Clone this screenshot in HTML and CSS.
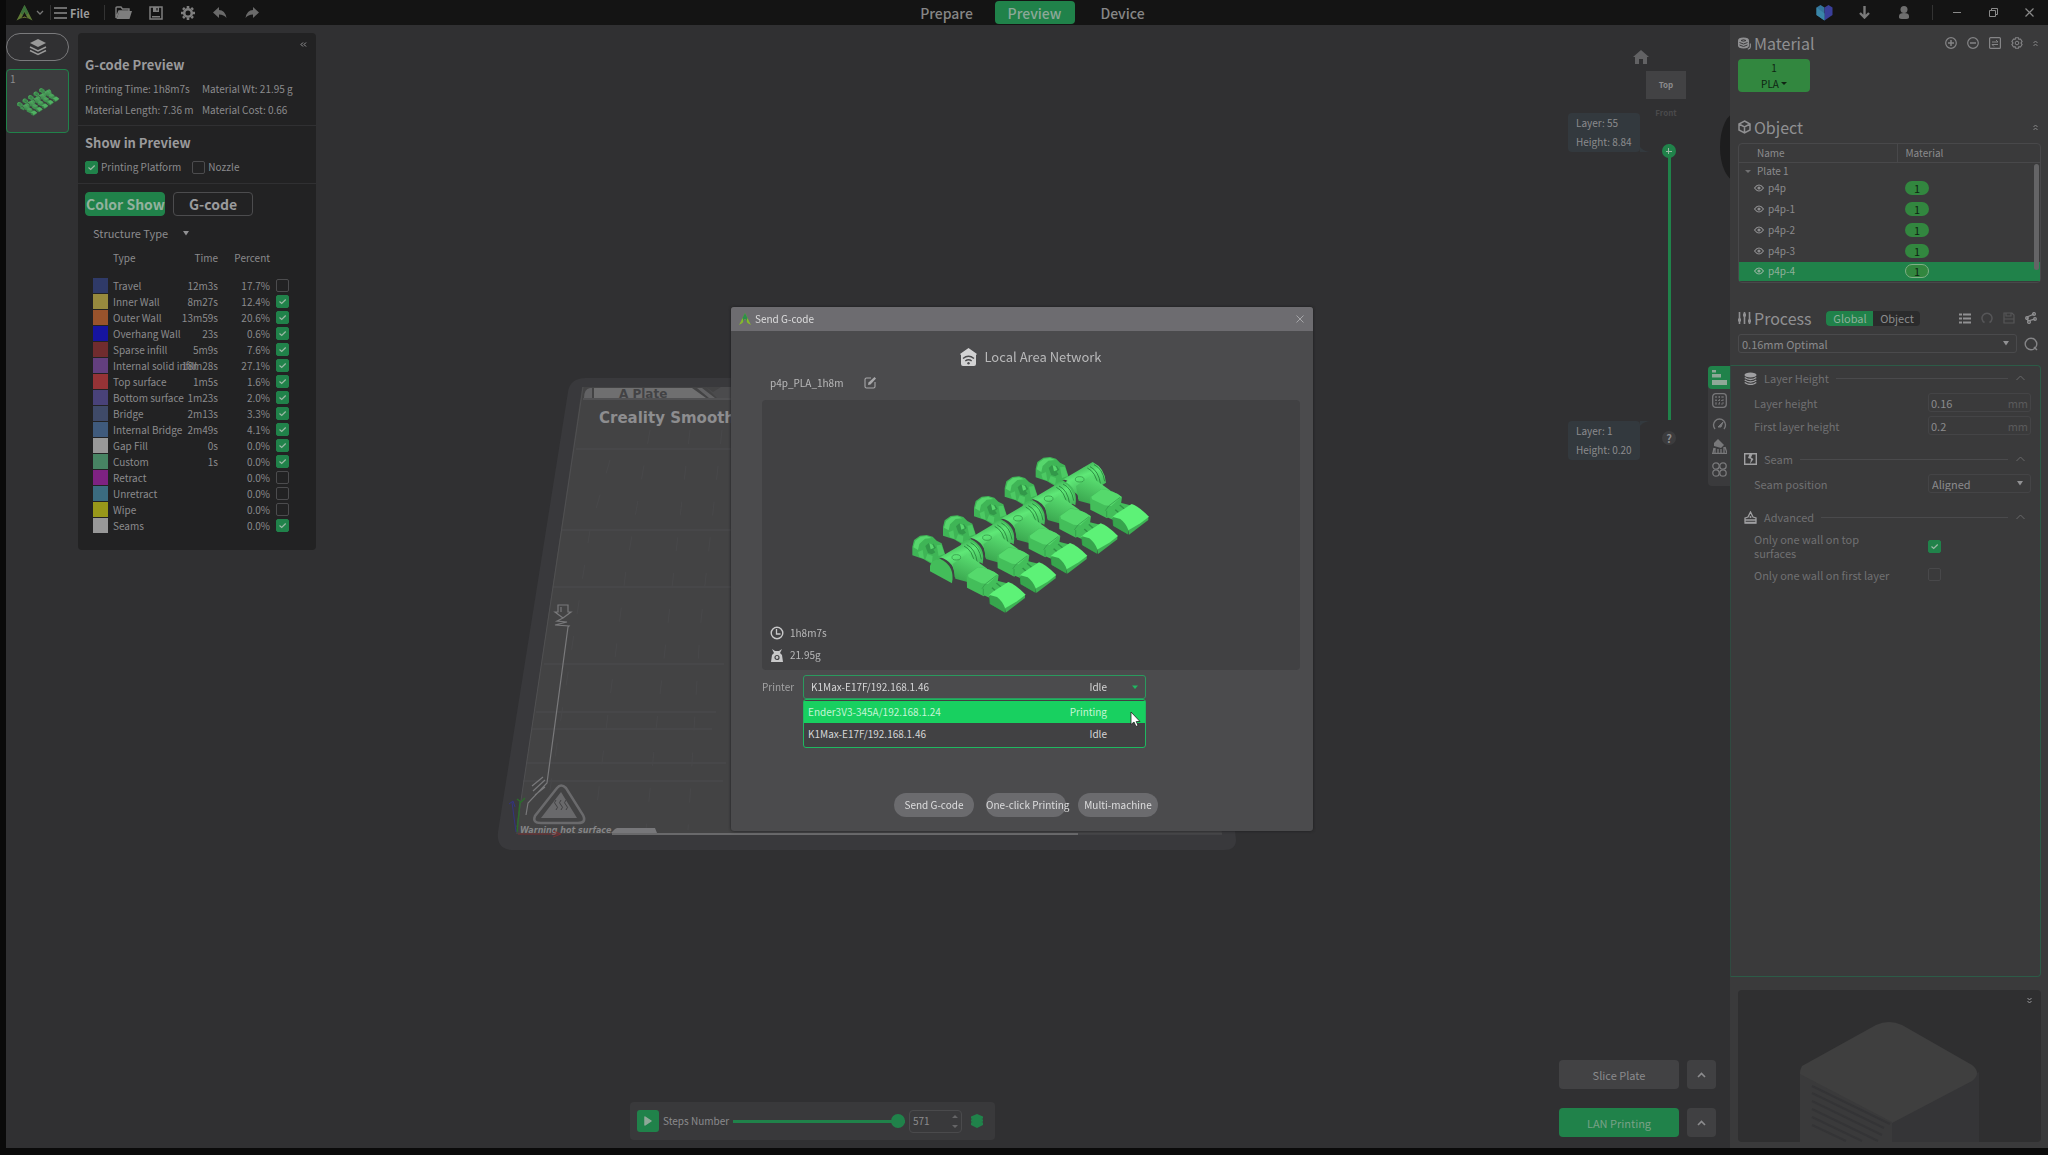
FILE: index.html
```html
<!DOCTYPE html>
<html lang="en">
<head>
  <meta charset="UTF-8">
  <meta name="viewport" content="width=device-width, initial-scale=1.0">
  <title>Creality Print</title>
  <link rel="stylesheet" href="styles.css">
</head>
<body>
  <header class="topbar">
    <div class="topbar-left">
      <svg class="logo" width="17" height="16" viewBox="0 0 17 16"><path d="M8.500 0 .5 15.500l5-2.500 3-6 3 6 5 2.500z" fill="#5f7a35"/><path d="M8.500 0 12.500 8 10.500 10 8.500 6l-2 4-2-2z" fill="#3a6f3a"/><path d="m5 13.500 3.500-2 3.500 2-3.500-1z" fill="#8c9a3c"/></svg>
      <svg class="logo-arrow" width="8" height="6" viewBox="0 0 8 6"><path d="m1 1 3 3 3-3" fill="none" stroke="#777" stroke-width="1.300"/></svg>
      <i class="sep"></i>
      <button class="menu-btn">
        <svg width="13" height="12" viewBox="0 0 13 12"><path d="M0 1h13M0 6h13M0 11h13" stroke="#8a8a8a" stroke-width="1.500"/></svg>
        File
      </button>
      <i class="sep sep-file"></i>
      <button class="tool" aria-label="Open"><svg width="18" height="14" viewBox="0 0 18 14"><path d="M1 12V2q0-1 1-1h4l1.500 2H14v2H4z" fill="none" stroke="#7e7e7e" stroke-width="1.400"/><path d="M4.500 5H17l-2.500 8H1.500z" fill="#7e7e7e"/></svg></button>
      <button class="tool" aria-label="Save"><svg width="14" height="14" viewBox="0 0 14 14"><path d="M1 1h12v12H1z" fill="none" stroke="#7e7e7e" stroke-width="1.500"/><path d="M4 1h6v5H4zM3 10h8v1.500H3z" fill="#7e7e7e"/><path d="M8 2v2.500" stroke="#141414" stroke-width="1.200"/></svg></button>
      <button class="tool" aria-label="Settings"><svg width="14" height="14" viewBox="0 0 14 14"><circle cx="7" cy="7" r="3.800" fill="none" stroke="#7e7e7e" stroke-width="2.600"/><path d="M7 0v2M7 12v2M0 7h2M12 7h2M2 2l1.500 1.500M10.500 10.500 12 12M2 12l1.500-1.500M10.500 3.500 12 2" stroke="#7e7e7e" stroke-width="2.600"/></svg></button>
      <button class="tool" aria-label="Undo"><svg width="14" height="12" viewBox="0 0 14 12"><path d="M6 0v3q6 0 7.500 8Q11 7.500 6 7.500V11L0 5.500z" fill="#6a6a6a"/></svg></button>
      <button class="tool" aria-label="Redo"><svg width="14" height="12" viewBox="0 0 14 12"><path d="M8 0v3Q2 3 .5 11 3 7.500 8 7.500V11l6-5.500z" fill="#6a6a6a"/></svg></button>
    </div>
    <nav class="tabs">
      <button class="tab">Prepare</button>
      <button class="tab active">Preview</button>
      <button class="tab">Device</button>
    </nav>
    <div class="topbar-right">
      <button class="tool wide" aria-label="Community"><svg width="17" height="16" viewBox="0 0 17 16"><path d="m.5 2.500 4-2.500 4 2.500v13L.5 10z" fill="#34749a"/><path d="m8.500 2.500 4-2.500 4 2.500V10l-8 5.500z" fill="#3a3f9a"/><path d="m.5 2.500 8 6v7l-8-5.500z" fill="#3a86a8"/></svg></button>
      <button class="tool wide" aria-label="Downloads"><svg width="11" height="13" viewBox="0 0 11 13"><path d="M5.500 0v10M1 7l4.500 4.500L10 7" fill="none" stroke="#7a7a7a" stroke-width="2.400"/></svg></button>
      <button class="tool wide" aria-label="Account"><svg width="12" height="14" viewBox="0 0 12 14"><circle cx="6" cy="3.500" r="3.500" fill="#6e6e6e"/><path d="M1 10q0-3 5-3t5 3v1.500Q11 13 6 13t-5-1.500z" fill="#6e6e6e"/></svg></button>
      <i class="sep"></i>
      <button class="tool win" aria-label="Minimize"><svg width="8" height="8" viewBox="0 0 8 8"><path d="M0 3.500h8" stroke="#8a8a8a"/></svg></button>
      <button class="tool win" aria-label="Restore"><svg width="9" height="9" viewBox="0 0 9 9"><path d="M.5 2.500h6v6h-6zM2.500 2.500v-2h6v6h-2" fill="none" stroke="#8a8a8a"/></svg></button>
      <button class="tool win" aria-label="Close"><svg width="9" height="9" viewBox="0 0 9 9"><path d="m.5.5 8 8m0-8-8 8" stroke="#8a8a8a" stroke-width="1.200"/></svg></button>
    </div>
  </header>

  <main class="workspace">
    <section class="viewport">
      <svg class="scene" viewBox="6 25 1724 1123" preserveAspectRatio="xMinYMin slice">
        <path d="M586 378h600l50 462q0 10-12 10H514q-18 0-16-18l70-440q2-14 18-14z" fill="#39393c"/>
        <path d="M582 387h590l50 447H516z" fill="#434344"/>
        <path d="M576 449h180M562 530h180M553 587h180M544 664h180M536 712h180M532 729h180M526 763h200M523 781h200" stroke="#4c4c4e"/>
        <path d="M610 460 590 530 570 660 550 790M650 430l-24 140-20 160-12 100M690 430l-16 140-18 160-10 100M722 430l-22 200-12 200" fill="none" stroke="#48484a" stroke-dasharray="14 22"/>
        <path d="m583 387-66 440" stroke="#505052"/>
        <path d="M594 388h98l14 10H594z" fill="#6f6f70"/>
        <path d="M584 398q0-9 6-10h2v10zM697 388h5l13 10h-6z" fill="#626264"/>
        <path d="M583 399h150" stroke="#606062"/>
        <path d="m706 387 7 5 8-5h20v11h-24z" fill="#4b4b4d"/>
        <text x="619" y="398" class="plate-tag">A Plate</text>
        <text x="599" y="423" class="plate-name">Creality Smooth</text>
        <path d="M558 605h10v7h3l-8 6-8-6h3zM561 607v5M563 618l-6 3 10 1-12 3 14 1-1 1-21 156-19 20-2 12M532 786l11-9M533 791l12-11M535 795l10-8" fill="none" stroke="#79797b" stroke-width="1.200"/>
        <path d="M557 788q4-5 9 0l17 27q4 8-5 8h-37q-9 0-6-7z" fill="none" stroke="#6a6a6c" stroke-width="2.500"/>
        <path d="m561 792 16 26h-36z" fill="#69696b"/>
        <path d="M556 800q-3 3 0 5t0 5M561 800q-3 3 0 5t0 5M566 800q-3 3 0 5t0 5" fill="none" stroke="#414143"/>
        <path d="m615 829 2-1h38l2 5h-46z" fill="#77777a"/>
        <path d="M612 834h466" stroke="#69696b" stroke-width="2"/>
        <path d="M1078 834h144" stroke="#4c4c4e"/>
        <text x="520" y="833" class="plate-warn">Warning hot surface</text>
        <path d="m517 832 3-30m-3-3 4 3 4-4" stroke="#2c6b2c" fill="none" stroke-width="1.500"/>
        <path d="M518 834h42m-7-3 8 3-8 3" stroke="#7a3033" fill="none"/>
        <path d="m516 832-4-30m-3 2 4-3 2 6" stroke="#333380" fill="none"/>
        <ellipse cx="1736" cy="147" rx="16" ry="34" fill="#1d1d1e"/>
      </svg>

      <div class="plates">
        <button class="plates-all" aria-label="All plates"><svg width="18" height="17" viewBox="0 0 18 17"><path d="m9 0 8 4-8 4-8-4z" fill="#999"/><path d="m1 8 8 4 8-4M1 11.500l8 4 8-4" fill="none" stroke="#999" stroke-width="1.500"/></svg></button>
        <button class="plate-thumb"><span>1</span>
          <svg width="44" height="30" viewBox="50 40 740 490"><use href="#model"/></svg>
        </button>
      </div>

      <aside class="gcode">
        <div class="gcode-block gcode-info">
          <button class="collapse" aria-label="Collapse"><svg width="7" height="5" viewBox="0 0 7 5"><path d="M3 .5l-2 2 2 2m3-4-2 2 2 2" fill="none" stroke="#98989a"/></svg></button>
          <h2>G-code Preview</h2>
          <div class="stats">
            <span>Printing Time: 1h8m7s</span><span>Material Wt: 21.95 g</span>
            <span>Material Length: 7.36 m</span><span>Material Cost: 0.66</span>
          </div>
        </div>
        <div class="gcode-block gcode-show">
          <h2>Show in Preview</h2>
          <div class="checks">
            <label><input type="checkbox" checked>Printing Platform</label>
            <label><input type="checkbox">Nozzle</label>
          </div>
        </div>
        <div class="gcode-modes">
          <button class="mode active">Color Show</button>
          <button class="mode">G-code</button>
        </div>
        <div class="gcode-types">
          <select class="structure" aria-label="Color scheme"><option>Structure Type</option></select>
          <table class="types">
            <thead><tr><th class="c-sw"></th><th class="c-type">Type</th><th class="c-time">Time</th><th class="c-pct">Percent</th><th class="c-chk"></th></tr></thead>
            <tbody>
              <tr><td><i class="sw travel"></i></td><td>Travel</td><td>12m3s</td><td>17.7%</td><td><input type="checkbox" aria-label="Travel"></td></tr>
              <tr><td><i class="sw inner"></i></td><td>Inner Wall</td><td>8m27s</td><td>12.4%</td><td><input type="checkbox" aria-label="Inner Wall" checked></td></tr>
              <tr><td><i class="sw outer"></i></td><td>Outer Wall</td><td>13m59s</td><td>20.6%</td><td><input type="checkbox" aria-label="Outer Wall" checked></td></tr>
              <tr><td><i class="sw overhang"></i></td><td>Overhang Wall</td><td>23s</td><td>0.6%</td><td><input type="checkbox" aria-label="Overhang Wall" checked></td></tr>
              <tr><td><i class="sw sparse"></i></td><td>Sparse infill</td><td>5m9s</td><td>7.6%</td><td><input type="checkbox" aria-label="Sparse infill" checked></td></tr>
              <tr><td><i class="sw solid"></i></td><td>Internal solid infill</td><td>18m28s</td><td>27.1%</td><td><input type="checkbox" aria-label="Internal solid infill" checked></td></tr>
              <tr><td><i class="sw top"></i></td><td>Top surface</td><td>1m5s</td><td>1.6%</td><td><input type="checkbox" aria-label="Top surface" checked></td></tr>
              <tr><td><i class="sw bottom"></i></td><td>Bottom surface</td><td>1m23s</td><td>2.0%</td><td><input type="checkbox" aria-label="Bottom surface" checked></td></tr>
              <tr><td><i class="sw bridge"></i></td><td>Bridge</td><td>2m13s</td><td>3.3%</td><td><input type="checkbox" aria-label="Bridge" checked></td></tr>
              <tr><td><i class="sw ibridge"></i></td><td>Internal Bridge</td><td>2m49s</td><td>4.1%</td><td><input type="checkbox" aria-label="Internal Bridge" checked></td></tr>
              <tr><td><i class="sw gap"></i></td><td>Gap Fill</td><td>0s</td><td>0.0%</td><td><input type="checkbox" aria-label="Gap Fill" checked></td></tr>
              <tr><td><i class="sw custom"></i></td><td>Custom</td><td>1s</td><td>0.0%</td><td><input type="checkbox" aria-label="Custom" checked></td></tr>
              <tr><td><i class="sw retract"></i></td><td>Retract</td><td></td><td>0.0%</td><td><input type="checkbox" aria-label="Retract"></td></tr>
              <tr><td><i class="sw unretract"></i></td><td>Unretract</td><td></td><td>0.0%</td><td><input type="checkbox" aria-label="Unretract"></td></tr>
              <tr><td><i class="sw wipe"></i></td><td>Wipe</td><td></td><td>0.0%</td><td><input type="checkbox" aria-label="Wipe"></td></tr>
              <tr><td><i class="sw seams"></i></td><td>Seams</td><td></td><td>0.0%</td><td><input type="checkbox" aria-label="Seams" checked></td></tr>
            </tbody>
          </table>
        </div>
      </aside>

      <div class="player">
        <button class="play" aria-label="Play"><svg width="8" height="10" viewBox="0 0 8 10"><path d="M1 1v8l6-4z" fill="#8fa898" stroke="#8fa898" stroke-width="1.500" stroke-linejoin="round"/></svg></button>
        <label for="steps">Steps Number</label>
        <input class="steps" id="steps" type="range" min="0" max="571" value="571">
        <div class="spin">
          <input type="text" value="571" aria-label="Step">
          <svg width="6" height="15" viewBox="0 0 6 15"><path d="m0 4 3-3 3 3zM0 11l3 3 3-3z" fill="#656567"/></svg>
        </div>
        <svg width="14" height="14" viewBox="0 0 14 14"><path d="m7 0 6 2.500v2l-1.500.5 1.500.5v2L11.500 8l1.500.5v2.500l-6 3-6-3V8.500L2.500 8 1 7.500v-2L2.500 5 1 4.500v-2z" fill="#20824a"/></svg>
      </div>

      <div class="view-tools">
        <div class="nav-cube">
          <svg class="home" width="16" height="14" viewBox="0 0 16 14"><path d="m8 0 8 7h-2v7h-4V9H6v5H2V7H0z" fill="#626264"/></svg>
          <span class="cube-top">Top</span>
          <span class="cube-front">Front</span>
        </div>
        <div class="layers">
          <div class="bubbles">
            <div class="bubble">Layer: 55<br>Height: 8.84<svg width="12" height="5" viewBox="0 0 12 5"><path d="M0 0q4 5 12 5H0z" fill="#33393e"/></svg></div>
            <div class="bubble low">Layer: 1<br>Height: 0.20<svg width="12" height="5" viewBox="0 0 12 5"><path d="M0 5q4-5 12-5H0z" fill="#33393e"/></svg></div>
          </div>
          <div class="layer-slider">
            <input class="layer-range" type="range" min="1" max="55" value="55" aria-label="Layer">
            <button class="help">?</button>
          </div>
          <div class="side-tabs">
            <button class="active" aria-label="Quality"><svg width="15" height="15" viewBox="0 0 15 15"><path d="M0 0h4v2.500H0zM0 4h9v3.500H0zM0 10h15v5H0z" fill="#8fa898"/></svg></button>
            <button aria-label="Infill"><svg width="15" height="15" viewBox="0 0 15 15"><rect x=".7" y=".7" width="13.600" height="13.600" rx="3" fill="none" stroke="#78787a" stroke-width="1.300"/><path d="M4 3v9M7.500 3v9M11 3v9M3 4h9M3 7.500h9M3 11h9" stroke="#6c6c6e" stroke-dasharray="2 1"/></svg></button>
            <button aria-label="Speed"><svg width="15" height="13" viewBox="0 0 15 13"><path d="M3 12a6 6 0 1 1 9 0" fill="none" stroke="#78787a" stroke-width="1.400"/><path d="m6 10 5-5-2 5z" fill="#78787a" stroke="#78787a"/></svg></button>
            <button aria-label="Support"><svg width="15" height="15" viewBox="0 0 15 15"><path d="m2 4 4-4 6 6-3 3-7-2z" fill="#78787a"/><path d="M0 14.300h15M3 9v5M6 10v4M9 10v4M12 8v6M2 9l-1 5m12-6 2 6" stroke="#78787a" stroke-width="1.300"/></svg></button>
            <button aria-label="Other"><svg width="15" height="15" viewBox="0 0 15 15"><g fill="none" stroke="#78787a" stroke-width="1.300"><circle cx="4" cy="4" r="3.200"/><circle cx="11" cy="4" r="3.200"/><circle cx="4" cy="11" r="3.200"/><circle cx="11" cy="11" r="3.200"/></g></svg></button>
          </div>
        </div>
        <div class="actions">
          <button class="action">Slice Plate</button>
          <button class="action-more" aria-label="Slice options"><svg width="9" height="6" viewBox="0 0 9 6"><path d="m1 5 3.500-3.500L8 5" fill="none" stroke="#8c8c8e" stroke-width="1.600"/></svg></button>
          <button class="action primary">LAN Printing</button>
          <button class="action-more" aria-label="Print options"><svg width="9" height="6" viewBox="0 0 9 6"><path d="m1 5 3.500-3.500L8 5" fill="none" stroke="#8c8c8e" stroke-width="1.600"/></svg></button>
        </div>
      </div>
    </section>

    <aside class="sidebar">
      <section class="material">
        <div class="side-head">
          <svg width="13" height="13" viewBox="0 0 13 13"><path d="M0 3.500Q0 .5 5.500.5T11 3.500v5q0 3-5.500 3T0 8.500z" fill="#909092"/><path d="M1.500 5.500q4 3 8 0M1.500 8q4 3 8 0M3 3.500q2.500-1.500 5 0-2.500 1.500-5 0" stroke="#3a3a3b" fill="none"/><path d="M12.300 6.500v3.500q0 1.500-2.500 2.300" fill="none" stroke="#909092" stroke-width="1.200"/></svg>
          <h3>Material</h3>
          <div class="head-icons">
            <button aria-label="Add"><svg width="12" height="12" viewBox="0 0 12 12"><circle cx="6" cy="6" r="5.300" fill="none" stroke="#858587" stroke-width="1.200"/><path d="M3 6h6M6 3v6" stroke="#858587" stroke-width="1.500"/></svg></button>
            <button aria-label="Remove"><svg width="12" height="12" viewBox="0 0 12 12"><circle cx="6" cy="6" r="5.300" fill="none" stroke="#858587" stroke-width="1.200"/><path d="M3 6h6" stroke="#858587" stroke-width="1.500"/></svg></button>
            <button aria-label="Sync"><svg width="12" height="12" viewBox="0 0 12 12"><rect x=".6" y=".6" width="10.800" height="10.800" rx="1" fill="none" stroke="#858587" stroke-width="1.200"/><path d="M3 5h6L7 3M9 7.500H3l2 2" fill="none" stroke="#858587"/></svg></button>
            <button aria-label="Material settings"><svg width="12" height="12" viewBox="0 0 12 12"><path d="M4.600.7h2.800l.5 1.600 1.600-.3 1.600 2.400L10 6l1.100 1.600L9.500 10l-1.600-.3-.5 1.600H4.600l-.5-1.600-1.600.3L.9 7.600 2 6 .9 4.400 2.500 2l1.600.3z" fill="none" stroke="#858587" stroke-width="1.100"/><circle cx="6" cy="6" r="1.800" fill="none" stroke="#858587"/></svg></button>
            <svg class="fold" width="5" height="7" viewBox="0 0 5 7"><path d="m.5 3 2-2 2 2m-4 3 2-2 2 2" fill="none" stroke="#858587"/></svg>
          </div>
        </div>
        <button class="filament"><span>1</span><span>PLA <svg width="6" height="3" viewBox="0 0 6 3"><path d="M0 0h6L3 3z" fill="#0f2413"/></svg></span></button>
      </section>

      <section class="objects">
        <div class="side-head">
          <svg width="13" height="14" viewBox="0 0 13 14"><path d="m6.500 1 5.500 3v6l-5.500 3L1 10V4zM1 4l5.500 3L12 4M6.500 7v6" fill="none" stroke="#909092" stroke-width="1.500"/></svg>
          <h3>Object</h3>
          <div class="head-icons"><svg class="fold" width="5" height="7" viewBox="0 0 5 7"><path d="m.5 3 2-2 2 2m-4 3 2-2 2 2" fill="none" stroke="#858587"/></svg></div>
        </div>
        <div class="object-box">
          <table class="object-table">
            <thead><tr><th>Name</th><th>Material</th></tr></thead>
            <tbody>
              <tr class="plate-row"><td colspan="2"><svg width="6" height="3" viewBox="0 0 6 3"><path d="M0 0h6L3 3z" fill="#707072"/></svg>Plate 1</td></tr>
              <tr><td><svg class="eye" width="10" height="8" viewBox="0 0 10 8"><path d="M.5 4q4.500-6 9 0-4.500 6-9 0z" fill="none" stroke="#8c8c8e" stroke-width="1.200"/><circle cx="5" cy="4" r="1.600" fill="#8c8c8e"/></svg>p4p</td><td><span class="pill">1</span></td></tr>
              <tr><td><svg class="eye" width="10" height="8" viewBox="0 0 10 8"><path d="M.5 4q4.500-6 9 0-4.500 6-9 0z" fill="none" stroke="#8c8c8e" stroke-width="1.200"/><circle cx="5" cy="4" r="1.600" fill="#8c8c8e"/></svg>p4p-1</td><td><span class="pill">1</span></td></tr>
              <tr><td><svg class="eye" width="10" height="8" viewBox="0 0 10 8"><path d="M.5 4q4.500-6 9 0-4.500 6-9 0z" fill="none" stroke="#8c8c8e" stroke-width="1.200"/><circle cx="5" cy="4" r="1.600" fill="#8c8c8e"/></svg>p4p-2</td><td><span class="pill">1</span></td></tr>
              <tr><td><svg class="eye" width="10" height="8" viewBox="0 0 10 8"><path d="M.5 4q4.500-6 9 0-4.500 6-9 0z" fill="none" stroke="#8c8c8e" stroke-width="1.200"/><circle cx="5" cy="4" r="1.600" fill="#8c8c8e"/></svg>p4p-3</td><td><span class="pill">1</span></td></tr>
              <tr class="selected"><td><svg class="eye" width="10" height="8" viewBox="0 0 10 8"><path d="M.5 4q4.500-6 9 0-4.500 6-9 0z" fill="none" stroke="#8fb09b" stroke-width="1.200"/><circle cx="5" cy="4" r="1.600" fill="#8fb09b"/></svg>p4p-4</td><td><span class="pill">1</span></td></tr>
            </tbody>
          </table>
          <i class="scrollbar"></i>
        </div>
      </section>

      <section class="process">
        <div class="side-head">
          <svg width="13" height="14" viewBox="0 0 13 14"><path d="M1.500 1v12M6.500 1v12M11.500 1v12" stroke="#909092" stroke-width="1.600"/><path d="M0 9h3M5 4h3M10 10h3" stroke="#909092" stroke-width="3"/></svg>
          <h3>Process</h3>
          <div class="segment"><button class="active">Global</button><button>Object</button></div>
          <div class="head-icons">
            <button aria-label="List"><svg width="12" height="11" viewBox="0 0 12 11"><path d="M0 1.500h3M0 5.500h3M0 9.500h3M4 1.500h8M4 5.500h8M4 9.500h8" stroke="#909092" stroke-width="1.800"/></svg></button>
            <button aria-label="Reset"><svg width="12" height="12" viewBox="0 0 12 12"><path d="M3.500 10.500a5 5 0 1 1 5 0" fill="none" stroke="#565658" stroke-width="1.500"/></svg></button>
            <button aria-label="Save preset"><svg width="12" height="12" viewBox="0 0 12 12"><path d="M1 1h8l2 2v8H1zM3 1v3h5V1M1 7h10" fill="none" stroke="#565658" stroke-width="1.200"/></svg></button>
            <button aria-label="Compare"><svg width="12" height="12" viewBox="0 0 12 12"><path d="m2 5 7-3M3 9l7-2M2 5l1 4" stroke="#909092" stroke-width="1.300"/><g fill="none" stroke="#909092" stroke-width="1.300"><circle cx="9" cy="2" r="1.400"/><circle cx="2" cy="6" r="1.300"/><circle cx="4" cy="10" r="1.400"/><circle cx="10" cy="7" r="1.300"/></g></svg></button>
          </div>
        </div>
        <div class="preset">
          <select aria-label="Preset"><option>0.16mm Optimal</option></select>
          <button aria-label="Search"><svg width="14" height="14" viewBox="0 0 14 14"><circle cx="7" cy="7" r="5.800" fill="none" stroke="#858587" stroke-width="1.400"/><path d="m10 10 3 3" stroke="#858587" stroke-width="1.500"/></svg></button>
        </div>
      </section>

      <section class="settings">
        <div class="group-head">
          <svg width="13" height="13" viewBox="0 0 13 13"><ellipse cx="6.500" cy="3" rx="6" ry="2.500" fill="#a0a0a2"/><path d="M.7 5.500q6 4 11.600 0M.7 8q6 4 11.600 0M.7 10.500q6 4 11.600 0" fill="none" stroke="#a0a0a2" stroke-width="1.300"/></svg>
          <span>Layer Height</span><i></i>
          <svg width="9" height="6" viewBox="0 0 9 6"><path d="m.5 5 4-4 4 4" fill="none" stroke="#68686a"/></svg>
        </div>
        <div class="field"><label for="lh">Layer height</label><div class="unit"><input id="lh" type="text" value="0.16"><span>mm</span></div></div>
        <div class="field"><label for="flh">First layer height</label><div class="unit"><input id="flh" type="text" value="0.2"><span>mm</span></div></div>
        <div class="group-head">
          <svg width="13" height="12" viewBox="0 0 13 12"><path d="M.7.7h11.600v10.600H.7z" fill="none" stroke="#a0a0a2" stroke-width="1.400"/><path d="M5.500 1 4 5l3 1-1 5 3.500-5-2.500-1.500L8.500 1z" fill="#a0a0a2"/></svg>
          <span>Seam</span><i></i>
          <svg width="9" height="6" viewBox="0 0 9 6"><path d="m.5 5 4-4 4 4" fill="none" stroke="#68686a"/></svg>
        </div>
        <div class="field"><label for="seam">Seam position</label><select id="seam"><option>Aligned</option></select></div>
        <div class="group-head">
          <svg width="13" height="13" viewBox="0 0 13 13"><path d="m1 7 3-1 2.500-5L9 6l3 1v5H1z" fill="none" stroke="#a0a0a2" stroke-width="1.300"/><path d="M1 9h11M1 11.500h11" stroke="#a0a0a2" stroke-width="1.300"/><circle cx="6.500" cy="6" r="1" fill="#a0a0a2"/></svg>
          <span>Advanced</span><i></i>
          <svg width="9" height="6" viewBox="0 0 9 6"><path d="m.5 5 4-4 4 4" fill="none" stroke="#68686a"/></svg>
        </div>
        <div class="field tall"><label for="topwall">Only one wall on top surfaces</label><input id="topwall" type="checkbox" checked></div>
        <div class="field"><label for="firstwall">Only one wall on first layer</label><input id="firstwall" class="faint" type="checkbox"></div>
      </section>

      <section class="camera">
        <svg class="stack" viewBox="0 0 303 152" preserveAspectRatio="xMidYMin slice">
          <path d="M62 82v70h179V82l-90 45z" fill="#353537"/>
          <path d="M64 76 138 35q13-6 26 0l70 40q10 8 0 16l-80 42-90-42q-4-8 0-15z" fill="#3f3f3f"/>
          <path d="M62 84v68h92v-20z" fill="#3a3a3b"/>
          <path d="m74 96 78 38M74 103l72 35M74 111l70 34M74 119l66 32M74 127l50 24M74 135l34 16" stroke="#343436" stroke-width="2"/>
        </svg>
        <button class="camera-fold" aria-label="Fold"><svg width="5" height="7" viewBox="0 0 5 7"><path d="m.5 1 2 2 2-2m-4 3 2 2 2-2" fill="none" stroke="#98989a"/></svg></button>
      </section>
    </aside>
  </main>

  <div class="modal-layer">
    <section class="modal" role="dialog" aria-labelledby="modal-title">
      <div class="modal-title">
        <svg width="12" height="12" viewBox="0 0 12 12"><path d="M6 0 0 12l3.500-2L6 5l2.500 5 3.500 2z" fill="#86b82c"/><path d="M6 0 3.500 5 5 9V6h2v3l1.500-4z" fill="#2e8f4a"/></svg>
        <span id="modal-title">Send G-code</span>
        <button aria-label="Close"><svg width="8" height="8" viewBox="0 0 8 8"><path d="m.5.5 7 7m0-7-7 7" stroke="#a5a5a8"/></svg></button>
      </div>
      <div class="modal-body">
        <div class="lan">
          <svg width="17" height="18" viewBox="0 0 17 18"><path d="M8.500 0 17 6l-1 1v9q0 2-2 2H3q-2 0-2-2V7L0 6z" fill="#d2d2d3"/><path d="M3 10.500q5.500-4.500 11 0M5.300 13q3.200-2.500 6.400 0" fill="none" stroke="#4b4b4d" stroke-width="1.500"/><circle cx="8.500" cy="15.300" r="1.200" fill="#4b4b4d"/></svg>
          <span>Local Area Network</span>
        </div>
        <div class="file-name">
          <span>p4p_PLA_1h8m</span>
          <button aria-label="Rename"><svg width="12" height="12" viewBox="0 0 12 12"><path d="M7 1H2.500Q1 1 1 2.500v7Q1 11 2.500 11h7q1.500 0 1.500-1.500V5" fill="none" stroke="#a8a8aa" stroke-width="1.100"/><path d="m4 8 .5-2.500L10.500 0 12 1.500 6.500 7.500z" fill="#a8a8aa"/></svg></button>
        </div>
        <div class="model-view">
          <svg class="model" viewBox="0 0 840 570">
            <defs>
              <linearGradient id="bar" x1=".2" y1=".1" x2=".6" y2="1">
                <stop offset="0" stop-color="#3aa850"/><stop offset=".35" stop-color="#5fe877"/><stop offset="1" stop-color="#38a44d"/>
              </linearGradient>
              <linearGradient id="torso" x1=".8" y1="0" x2=".3" y2="1">
                <stop offset="0" stop-color="#5fe877"/><stop offset="1" stop-color="#39a54e"/>
              </linearGradient>
              <g id="figure">
                <path d="m67 320 5-20 18-13 20-2 18 5 12 12 15 8 11 35-42 26-24-14-33-11z" fill="#3fb556"/>
                <path d="m70 322 6-20 16-12 18-2 15 6-20 2-17 16-4 18z" fill="#56d66c"/>
                <path d="m106 318 10-9 6 6 8-4 8 12-8 6 6 8-10 6-12-4-4-10z" fill="#329849"/>
                <path d="m84 336 14-6 4 26-14-5zM112 342l16 6-2 20-20-10zM140 316l14-2 10 28-18 6z" fill="#4cc963"/>
                <path d="m118 310 10 4 4 10-10 4z" fill="#57d86d"/>
                <path d="M150 352 238 300q36 18 40 62l-84 50q2-46-44-60z" fill="url(#bar)"/>
                <path d="M150 356q-28 4-30 22v16l66 36q10-52-36-74z" fill="#43bd5a"/>
                <path d="M222 318q26 12 32 54M230 314q26 12 32 54M242 308q26 12 32 50" fill="none" stroke="#238039" stroke-width="2.500"/>
                <path d="m188 372 42-30 62 44-46 44-50-14z" fill="url(#torso)"/>
                <ellipse cx="199" cy="352" rx="13" ry="8" fill="none" stroke="#2c8a40" stroke-width="2"/>
                <path d="m282 438 22-20 56 14-60 42-22-10z" fill="#43bd5a"/>
                <path d="m296 434 22 20M316 426l18 16" stroke="#2f9446" stroke-width="4"/>
                <path d="m230 405 34-24q36 4 62 24l-3 20-42 44-50-26z" fill="#43be5a"/>
                <path d="m234 404 30-22q34 2 60 22l-30 28-20-2-38-18z" fill="#55d96c"/>
                <path d="m276 446 10-14 34-26M280 446v20" fill="none" stroke="#2f9446" stroke-width="2"/>
                <path d="m297 466 48 38v14l-46-27z" fill="#2f9a45"/>
                <path d="m345 504 60-40v10l-58 44z" fill="#3db254"/>
                <path d="M297 466q6-6 14-12l44-28q20 6 52 38l-26 20-38 22z" fill="#5df277"/>
                <path d="m299 465 22 6q16 12 24 33l-2 12-42-24z" fill="#37a54d"/>
              </g>
              <g id="model">
                <path d="m520 132 62-50q40-6 54 52l-60 40z" fill="url(#bar)"/>
                <path d="M586 84q38 4 46 50" fill="none" stroke="#1f7a34" stroke-width="3"/>
                <use href="#figure" x="370" y="-234"/>
                <use href="#figure" x="277" y="-176"/>
                <use href="#figure" x="185" y="-117"/>
                <use href="#figure" x="92" y="-59"/>
                <use href="#figure"/>
              </g>
            </defs>
            <use href="#model"/>
          </svg>
          <ul class="model-meta">
            <li><svg width="14" height="14" viewBox="0 0 14 14"><circle cx="7" cy="7" r="5.800" fill="none" stroke="#c8c8c9" stroke-width="1.400"/><path d="M6.500 3v5h4" fill="none" stroke="#c8c8c9" stroke-width="1.300"/></svg>1h8m7s</li>
            <li><svg width="14" height="13" viewBox="0 0 14 13"><path d="M2 0l3 2h4l3-2-2 4 2 2 1 7H1l1-7 2-2z" fill="#c8c8c9"/><circle cx="7" cy="8.500" r="2" fill="none" stroke="#414143" stroke-width="1.200"/></svg>21.95g</li>
          </ul>
        </div>
        <div class="printer">
          <label for="printer">Printer</label>
          <div class="combo">
            <select id="printer"><option>K1Max-E17F/192.168.1.46</option><option>Ender3V3-345A/192.168.1.24</option></select>
            <span class="combo-state">Idle</span>
            <ul class="combo-list">
              <li class="hover"><span>Ender3V3-345A/192.168.1.24</span><span>Printing</span></li>
              <li><span>K1Max-E17F/192.168.1.46</span><span>Idle</span></li>
            </ul>
            <svg class="cursor" width="11" height="17" viewBox="0 0 11 17"><path d="M1 1v12.500l3-2.500 2 4.500 2-1L6.200 10.500H10z" fill="#fff" stroke="#222" stroke-width=".8"/></svg>
          </div>
        </div>
        <div class="modal-actions">
          <button>Send G-code</button>
          <button>One-click Printing</button>
          <button>Multi-machine</button>
        </div>
      </div>
    </section>
  </div>
</body>
</html>
```

FILE: styles.css
```css
* {
  box-sizing: border-box;
}

body {
  margin: 0;
  height: 100vh;
  display: flex;
  flex-direction: column;
  padding: 0 0 7px 6px;
  background: #0a0a0a;
  color: #8b8b8d;
  font-family: "Noto Sans CJK SC", "Noto Sans", sans-serif;
  font-size: 10px;
  line-height: 16px;
  overflow: hidden;
}

button, input, select {
  font: inherit;
  color: inherit;
  background: none;
  border: 0;
  padding: 0;
  margin: 0;
}

h2, h3, ul {
  margin: 0;
  padding: 0;
  list-style: none;
}

svg {
  display: block;
  flex: none;
}

input[type="checkbox"] {
  appearance: none;
  display: block;
  flex: none;
  width: 13px;
  height: 13px;
  border: 1px solid #4c4c4e;
  border-radius: 2px;
}

input[type="checkbox"]:checked {
  border-color: #20824a;
  background: #20824a url("data:image/svg+xml,%3Csvg xmlns='http://www.w3.org/2000/svg' viewBox='0 0 11 11'%3E%3Cpath d='M2.500 5.500l2.200 2 4-4' fill='none' stroke='%239cb8a6' stroke-width='1.200'/%3E%3C/svg%3E") center / 11px no-repeat;
}

input[type="checkbox"].faint {
  border-color: #48484a;
}

select {
  appearance: none;
  background: url("data:image/svg+xml,%3Csvg xmlns='http://www.w3.org/2000/svg' viewBox='0 0 6 5'%3E%3Cpath d='M0 0h6L3 4.500z' fill='%23919193'/%3E%3C/svg%3E") right 7px center / 6px 5px no-repeat;
}

/* top bar */
.topbar {
  flex: none;
  height: 25px;
  display: grid;
  grid-template-columns: 1fr auto 1fr;
  align-items: center;
  padding: 0 1px 0 10px;
  background: #141414;
}

.topbar-left, .topbar-right {
  display: flex;
  align-items: center;
}

.topbar-right {
  justify-content: flex-end;
}

.logo-arrow {
  margin: 0 6px 0 3px;
}

.sep {
  width: 1px;
  height: 15px;
  background: #333;
}

.sep-file {
  margin: 0 3px 0 14px;
}

.menu-btn {
  display: flex;
  align-items: center;
  gap: 3px;
  margin-left: 3px;
  color: #9a9a9a;
  font-size: 11px;
  font-weight: 700;
}

.tool {
  width: 32px;
  height: 24px;
  display: flex;
  align-items: center;
  justify-content: center;
}

.tool.wide {
  width: 40px;
}

.tool.win {
  width: 36px;
}

.topbar-right .sep {
  margin: 0 6px 0 8px;
}

.tabs {
  display: flex;
  gap: 8px;
  padding-left: 6px;
}

.tab {
  width: 80px;
  height: 23px;
  border-radius: 4px;
  font-size: 14px;
  font-weight: 500;
  color: #868686;
}

.tab.active {
  background: #20824a;
  color: #8ca898;
}

.workspace {
  flex: 1;
  min-height: 0;
  display: flex;
}

/* 3d view */
.viewport {
  flex: 1;
  position: relative;
  display: flex;
  padding-top: 8px;
  background: #303032;
}

.scene {
  position: absolute;
  inset: 0;
  width: 100%;
  height: 100%;
}

.plate-tag, .plate-name, .plate-warn {
  font-family: "DejaVu Sans", sans-serif;
  font-weight: 700;
}

.plate-tag {
  font-size: 12px;
  fill: #424244;
}

.plate-name {
  font-size: 15px;
  fill: #8d8d8f;
}

.plate-warn {
  font-size: 8px;
  font-style: italic;
  fill: #858587;
}

.plates, .gcode, .player, .view-tools {
  position: relative;
}

.plates {
  width: 63px;
  display: flex;
  flex-direction: column;
  gap: 8px;
}

.plates-all {
  height: 28px;
  display: flex;
  align-items: center;
  justify-content: center;
  border: 1px solid #7a7a7c;
  border-radius: 14px;
}

.plate-thumb {
  height: 64px;
  display: flex;
  flex-direction: column;
  align-items: center;
  border: 1px solid #20824a;
  border-radius: 4px;
  background: #3c3c3e;
}

.plate-thumb span {
  align-self: flex-start;
  padding: 1px 3px 0;
}

.plate-thumb svg {
  opacity: .65;
}

/* g-code panel */
.gcode {
  width: 238px;
  height: 517px;
  margin-left: 9px;
  border-radius: 4px;
  background: #222223;
}

.gcode h2 {
  font-size: 13px;
  line-height: 20px;
  font-weight: 700;
  color: #9a9a9c;
}

.gcode-block {
  border-bottom: 1px solid #303032;
  padding: 0 7px;
}

.gcode-info {
  height: 93px;
}

.collapse {
  display: block;
  margin-left: auto;
  padding: 9px 2px 8px;
}

.stats {
  display: grid;
  grid-template-columns: 117px 1fr;
  row-gap: 5px;
  margin-top: 6px;
  white-space: nowrap;
}

.gcode-show {
  height: 58px;
  padding-top: 7px;
}

.checks {
  display: flex;
  gap: 11px;
  margin-top: 6px;
}

.checks label {
  display: flex;
  align-items: center;
  gap: 3px;
}

.gcode-modes {
  display: flex;
  gap: 8px;
  padding: 8px 7px 0;
}

.mode {
  width: 80px;
  height: 24px;
  border: 1px solid #4c4c4e;
  border-radius: 4px;
  font-size: 14px;
  line-height: 20px;
  font-weight: 700;
  color: #9a9a9c;
  white-space: nowrap;
}

.mode.active {
  border-color: #20824a;
  background-color: #20824a;
  color: #93b19e;
}

.gcode-types {
  padding: 8px 15px 0;
}

.structure {
  width: 100px;
  height: 18px;
  background-position: right 4px center;
  font-size: 11px;
}

.types {
  table-layout: fixed;
  border-collapse: collapse;
  width: 196px;
  margin-top: 8px;
  white-space: nowrap;
}

.types th {
  height: 16px;
  padding: 0 0 11px;
  font-weight: 400;
  text-align: right;
}

.types .c-pct {
  padding-right: 0;
}

.types td {
  height: 16px;
  padding: 0;
  text-align: right;
  line-height: 15px;
}

.types .c-sw { width: 20px; }
.types .c-type { width: 57px; }
.types .c-time { width: 48px; }
.types .c-pct { width: 52px; }
.types .c-chk { width: 19px; }

.types .c-type, .types td:nth-child(2) {
  text-align: left;
}

.types td input {
  margin-left: auto;
}

.sw {
  display: block;
  width: 15px;
  height: 15px;
}

.travel { background: #2f3a68; }
.inner { background: #978a3e; }
.outer { background: #98532c; }
.overhang { background: #1614a0; }
.sparse { background: #702c2e; }
.solid { background: #633f7e; }
.top { background: #963336; }
.bottom { background: #494279; }
.bridge { background: #3f4a68; }
.ibridge { background: #3f5a7c; }
.gap, .seams { background: #989898; }
.custom { background: #478463; }
.retract { background: #7e2282; }
.unretract { background: #3b6c80; }
.wipe { background: #98981a; }

/* step player */
.player {
  width: 365px;
  height: 38px;
  display: flex;
  align-items: center;
  align-self: flex-end;
  margin: 0 auto 8px 314px;
  padding: 0 11px 0 7px;
  border-radius: 4px;
  background: #39393b;
}

.play {
  width: 22px;
  height: 22px;
  display: flex;
  align-items: center;
  justify-content: center;
  border-radius: 3px;
  background: #20824a;
}

.player label {
  margin: 0 4px;
}

.steps {
  appearance: none;
  flex: 1;
  min-width: 0;
  height: 14px;
}

.steps::-webkit-slider-runnable-track {
  height: 3px;
  background: #20824a;
}

.steps::-webkit-slider-thumb {
  appearance: none;
  width: 14px;
  height: 14px;
  margin-top: -6px;
  border-radius: 50%;
  background: #20824a;
}

.spin {
  width: 53px;
  height: 23px;
  display: flex;
  align-items: center;
  margin: 0 8px 0 4px;
  padding: 0 3px;
  border: 1px solid #4a4a4c;
  border-radius: 4px;
}

.spin input {
  flex: 1;
  min-width: 0;
}

/* right side of the view */
.view-tools {
  width: 171px;
  display: flex;
  flex-direction: column;
}

.nav-cube {
  height: 86px;
  display: grid;
  grid-template-columns: 40px;
  grid-template-rows: 14px 28px 14px;
  row-gap: 7px;
  justify-content: end;
  padding: 17px 44px 0 0;
  text-align: center;
}

.home {
  justify-self: start;
  margin-left: -13px;
}

.cube-top {
  background: #424244;
  font-size: 8px;
  font-weight: 700;
  line-height: 28px;
}

.cube-front {
  color: #4a4a4c;
  font-size: 8px;
  font-weight: 700;
  line-height: 14px;
}

.layers {
  flex: none;
  height: 380px;
  display: flex;
  margin-top: -6px;
  padding-left: 9px;
}

.bubbles {
  width: 91px;
  height: 347px;
  display: flex;
  flex-direction: column;
  justify-content: space-between;
}

.bubble {
  position: relative;
  width: 72px;
  padding: 0 8px;
  height: 39px;
  border-radius: 4px;
  background: #33393e;
  line-height: 19px;
  white-space: nowrap;
}

.bubble svg {
  position: absolute;
  left: 100%;
  bottom: 0;
}

.bubble.low svg {
  top: 0;
  bottom: auto;
}

.layer-slider {
  width: 20px;
  padding-top: 31px;
}

.layer-range {
  appearance: none;
  display: block;
  writing-mode: vertical-lr;
  direction: rtl;
  width: 14px;
  height: 276px;
  margin: 0 3px;
}

.layer-range::-webkit-slider-runnable-track {
  width: 3px;
  background: #20824a;
}

.layer-range::-webkit-slider-thumb {
  appearance: none;
  width: 14px;
  height: 14px;
  margin-left: -6px;
  border-radius: 50%;
  background:
    linear-gradient(#9cb8a6, #9cb8a6) center / 6px 1px no-repeat,
    linear-gradient(#9cb8a6, #9cb8a6) center / 1px 6px no-repeat,
    #20824a;
}

.help {
  display: block;
  width: 14px;
  height: 14px;
  margin: 11px 3px 0;
  border-radius: 50%;
  background: #3c3c3e;
  font-size: 11px;
  font-weight: 700;
  line-height: 14px;
}

.side-tabs {
  width: 22px;
  height: 120px;
  margin: 253px 0 0 auto;
  display: flex;
  flex-direction: column;
  border-radius: 4px 0 0 4px;
  background: #3a3a3c;
}

.side-tabs button {
  height: 23px;
  display: flex;
  align-items: center;
  justify-content: center;
}

.side-tabs .active {
  border-radius: 4px 0 0 4px;
  background: #20824a;
}

.actions {
  display: grid;
  grid-template-columns: 120px 29px;
  grid-auto-rows: 29px;
  gap: 19px 8px;
  margin: auto 0 11px;
}

.action {
  border-radius: 4px;
  background: #424244;
  font-size: 11px;
}

.action.primary {
  background: #20824a;
  color: #79a187;
}

.action-more {
  display: flex;
  align-items: center;
  justify-content: center;
  border-radius: 4px;
  background: #404042;
}

/* sidebar */
.sidebar {
  width: 318px;
  display: flex;
  flex-direction: column;
  padding: 8px 7px 6px 0;
  background: #3a3a3b;
}

.material, .objects, .process {
  padding-left: 8px;
}

.side-head {
  height: 20px;
  display: flex;
  align-items: center;
  gap: 3px;
}

.side-head h3 {
  font-size: 16px;
  font-weight: 400;
  color: #909092;
}

.head-icons {
  display: flex;
  align-items: center;
  gap: 10px;
  margin-left: auto;
  padding-right: 3px;
}

.process .head-icons {
  padding-right: 4px;
}

.material {
  height: 84px;
}

.filament {
  width: 72px;
  height: 33px;
  margin-top: 6px;
  border-radius: 4px;
  background: #32873f;
  color: #0f2413;
}

.filament span {
  display: flex;
  align-items: center;
  justify-content: center;
  gap: 2px;
  line-height: 16px;
}

.object-box {
  position: relative;
  height: 140px;
  margin-top: 6px;
  border: 1px solid #48484a;
  border-radius: 4px;
}

.object-table {
  width: 100%;
  table-layout: fixed;
  border-collapse: collapse;
}

.object-table th {
  height: 18px;
  padding: 0 0 0 18px;
  border-bottom: 1px solid #48484a;
  font-weight: 400;
  text-align: left;
}

.object-table th + th {
  width: 143px;
  padding-left: 8px;
  border-left: 1px solid #48484a;
}

.object-table td {
  height: 21px;
  padding: 0 0 0 29px;
  line-height: 18px;
}

.object-table td + td {
  padding-left: 8px;
}

.object-table .plate-row td {
  height: 15px;
  padding-left: 18px;
  line-height: 15px;
}

.plate-row svg {
  float: left;
  margin: 7px 0 0 -12px;
}

.eye {
  float: left;
  margin: 5px 0 0 -14px;
}

.object-table .selected td {
  height: 19px;
  background: #20824a;
  color: #8fb09b;
}

.pill {
  display: block;
  width: 24px;
  height: 14px;
  border-radius: 7px;
  background: #32873f;
  color: #0f2413;
  font-size: 11px;
  line-height: 14px;
  text-align: center;
}

.selected .pill {
  border: 1px solid #7fae85;
  line-height: 12px;
}

.scrollbar {
  position: absolute;
  top: 20px;
  right: 1px;
  width: 5px;
  height: 106px;
  border-radius: 3px;
  background: #646466;
}

.process {
  padding-top: 25px;
}

.segment {
  display: flex;
  margin-left: 12px;
  border-radius: 4px;
  background: #2b2b2c;
  font-size: 11px;
  line-height: 15px;
}

.segment button {
  width: 47px;
  height: 15px;
}

.segment .active {
  border-radius: 4px 0 0 4px;
  background: #20824a;
  color: #8fb09b;
}

.preset {
  display: flex;
  align-items: center;
  gap: 7px;
  margin-top: 6px;
}

.preset select {
  flex: 1;
  height: 19px;
  padding-left: 3px;
  border: 1px solid #4a4a4c;
  border-radius: 3px;
  font-size: 11px;
}

.preset button {
  padding-right: 3px;
}

.settings {
  flex: 1;
  min-height: 0;
  margin-top: 12px;
  padding: 3px 9px 0 13px;
  border: 1px solid #2c5b47;
  border-left-color: #2f4a40;
  border-radius: 0 4px 4px 0;
  color: #707072;
  font-size: 11px;
}

.group-head {
  height: 18px;
  display: flex;
  align-items: center;
  gap: 7px;
  padding-right: 6px;
}

.group-head i {
  flex: 1;
  height: 1px;
  margin-right: 1px;
  background: #4a4a4c;
}

.group-head ~ .group-head {
  margin-top: 15px;
}

.field {
  display: grid;
  grid-template-columns: 1fr 103px;
  align-items: center;
  min-height: 19px;
  margin-top: 4px;
  padding-left: 10px;
  line-height: 14px;
}

.field label {
  max-width: 136px;
}

.group-head + .field {
  margin-top: 6px;
}

.field.tall + .field {
  margin-top: 5px;
}

.unit {
  height: 19px;
  display: flex;
  align-items: center;
  padding: 0 2px;
  border: 1px solid #444446;
  border-radius: 3px;
}

.unit input {
  flex: 1;
  min-width: 0;
}

.unit input, .field select {
  color: #8b8b8d;
}

.unit span {
  color: #5a5a5c;
}

.field select {
  height: 19px;
  padding-left: 3px;
  border: 1px solid #444446;
  border-radius: 3px;
}

.camera {
  position: relative;
  height: 152px;
  margin: 13px 0 0 8px;
  border-radius: 4px;
  background: #2f2f30;
  overflow: hidden;
}

.stack {
  width: 100%;
  height: 100%;
}

.camera-fold {
  position: absolute;
  top: 7px;
  right: 9px;
}

/* send dialog */
.modal-layer {
  position: fixed;
  inset: 0;
  display: grid;
  place-items: center;
  padding: 0 4px 17px 0;
}

.modal {
  width: 582px;
  border-radius: 3px;
  background: #4b4b4d;
  box-shadow: 0 0 3px #1c1c1d;
  color: #b9b9ba;
  overflow: hidden;
}

.modal-title {
  height: 24px;
  display: flex;
  align-items: center;
  gap: 4px;
  padding: 0 9px 0 8px;
  background: #6d6c70;
  color: #dededf;
}

.modal-title button {
  margin-left: auto;
}

.modal-body {
  height: 500px;
  display: flex;
  flex-direction: column;
  padding: 16px 13px 14px 31px;
}

.lan {
  height: 20px;
  display: flex;
  align-items: center;
  justify-content: center;
  gap: 7px;
  font-size: 13px;
}

.file-name {
  height: 16px;
  display: flex;
  align-items: center;
  gap: 21px;
  margin-top: 8px;
  padding-left: 8px;
}

.model-view {
  height: 270px;
  display: flex;
  flex-direction: column;
  margin-top: 9px;
  padding: 40px 8px 4px;
  border-radius: 4px;
  background: #414143;
}

.model {
  align-self: center;
  width: 280px;
  height: 190px;
  margin-right: 2px;
}

.model-meta {
  margin-top: -8px;
}

.model-meta li {
  height: 22px;
  display: flex;
  align-items: center;
  gap: 6px;
}

.printer {
  display: flex;
  align-items: center;
  margin-top: 5px;
}

.printer label {
  width: 41px;
  color: #a3a3a4;
}

.combo {
  position: relative;
  width: 343px;
  color: #d6d6d7;
}

.combo select {
  display: block;
  width: 100%;
  height: 24px;
  padding-left: 7px;
  border: 1px solid #2a9a5e;
  border-radius: 3px;
  background-image: url("data:image/svg+xml,%3Csvg xmlns='http://www.w3.org/2000/svg' viewBox='0 0 6 4'%3E%3Cpath d='M0 0h6L3 3.500z' fill='%231fb860'/%3E%3C/svg%3E");
}

.combo-state {
  position: absolute;
  top: 4px;
  right: 39px;
}

.combo-list {
  position: absolute;
  top: 100%;
  left: 0;
  right: 0;
  padding: 1px 0 2px;
  border: 1px solid #1fb860;
  border-radius: 3px;
  background: #414143;
}

.combo-list li {
  height: 22px;
  display: flex;
  align-items: center;
  justify-content: space-between;
  padding: 0 38px 0 4px;
}

.combo-list .hover {
  background: #18d060;
  color: #c5f5d6;
}

.cursor {
  position: absolute;
  top: 36px;
  left: 327px;
}

.modal-actions {
  display: flex;
  justify-content: center;
  gap: 12px;
  margin-top: auto;
  padding-right: 10px;
}

.modal-actions button {
  width: 80px;
  height: 24px;
  border-radius: 12px;
  background: #6b6b6e;
  color: #dededf;
  white-space: nowrap;
}
```
